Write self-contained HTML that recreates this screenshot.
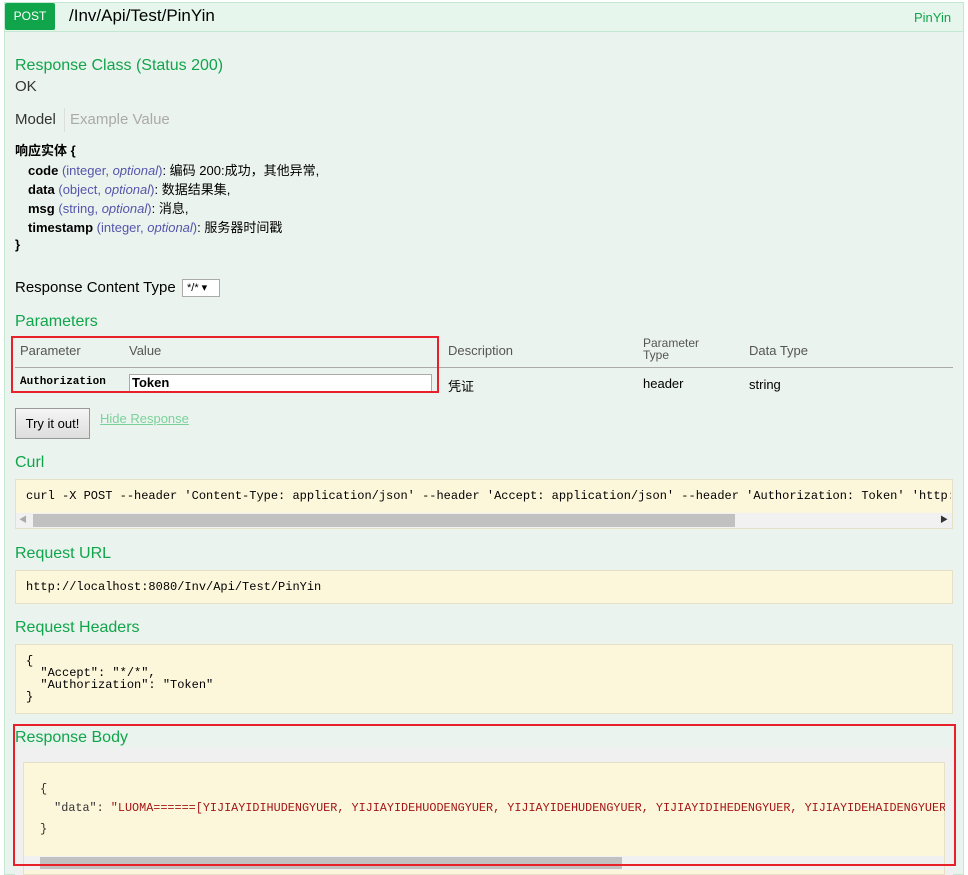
<!DOCTYPE html>
<html><head><meta charset="utf-8"><style>
*{margin:0;padding:0;box-sizing:border-box}
body{width:968px;height:875px;background:#fff;font-family:"Liberation Sans","Noto Sans CJK SC",sans-serif;position:relative;overflow:hidden;color:#000}
.a{position:absolute;white-space:nowrap}
.g{color:#10a54a;font-size:16px}
.m{font-family:"Liberation Mono",monospace;font-size:12px}
.box{position:absolute;background:#fcf6db;border:1px solid #e5e0c6}
.sm{font-size:13px}
.p{color:#5555aa}
</style></head><body>
<div class="a" style="left:4px;top:2px;width:960px;height:873px;background:#ebf3ef;border:1px solid #c3e8d1"></div>
<div class="a" style="left:5px;top:3px;width:958px;height:29px;background:#e7f6ec;border-bottom:1px solid #c3e8d1"></div>
<div class="a" style="left:5px;top:3px;width:50px;height:27px;background:#10a54a;color:#fff;font-size:12px;line-height:27px;text-align:center;border-radius:2px">POST</div>
<div class="a" style="left:69px;top:6px;font-size:17px">/Inv/Api/Test/PinYin</div>
<div class="a" style="left:914px;top:10px;font-size:13px;color:#10a54a">PinYin</div>

<div class="a g" style="left:15px;top:57px">Response Class (Status 200)</div>
<div class="a" style="left:15px;top:78px;font-size:15px;color:#333">OK</div>
<div class="a" style="left:15px;top:111px;font-size:15px;color:#333">Model</div>
<div class="a" style="left:64px;top:108px;width:1px;height:24px;background:#ddd"></div>
<div class="a" style="left:70px;top:111px;font-size:15px;color:#aaa">Example Value</div>
<div class="a sm" style="left:15px;top:140px;font-weight:bold">响应实体 {</div>
<div class="a sm" style="left:28px;top:160px"><b>code</b> <span class="p">(integer, <i>optional</i>)</span>: 编码 200:成功，其他异常,</div>
<div class="a sm" style="left:28px;top:179px"><b>data</b> <span class="p">(object, <i>optional</i>)</span>: 数据结果集,</div>
<div class="a sm" style="left:28px;top:198px"><b>msg</b> <span class="p">(string, <i>optional</i>)</span>: 消息,</div>
<div class="a sm" style="left:28px;top:217px"><b>timestamp</b> <span class="p">(integer, <i>optional</i>)</span>: 服务器时间戳</div>
<div class="a sm" style="left:15px;top:237px;font-weight:bold">}</div>

<div class="a" style="left:15px;top:279px;font-size:15px">Response Content Type</div>
<div class="a" style="left:182px;top:279px;width:38px;height:18px;background:#fff;border:1px solid #aaa;font-size:11px;line-height:16px;padding-left:4px">*/* ▾</div>
<div class="a g" style="left:15px;top:313px">Parameters</div>
<div class="a sm" style="left:20px;top:343px;color:#555">Parameter</div>
<div class="a sm" style="left:129px;top:343px;color:#555">Value</div>
<div class="a sm" style="left:448px;top:343px;color:#555">Description</div>
<div class="a" style="left:643px;top:337px;color:#555;font-size:12px;line-height:12px">Parameter<br>Type</div>
<div class="a sm" style="left:749px;top:343px;color:#555">Data Type</div>
<div class="a" style="left:15px;top:367px;width:938px;height:1px;background:#aaa"></div>
<div class="a" style="left:20px;top:376px;font-family:'Liberation Mono',monospace;font-size:11px;font-weight:bold">Authorization</div>
<div class="a" style="left:129px;top:374px;width:303px;height:18px;background:#fff;border:1px solid #aaa;font-size:13px;font-weight:bold;padding-left:2px;line-height:16px">Token</div>
<div class="a sm" style="left:448px;top:376px">凭证</div>
<div class="a sm" style="left:643px;top:376px">header</div>
<div class="a sm" style="left:749px;top:377px">string</div>
<div class="a" style="left:11px;top:336px;width:428px;height:57px;border:2px solid #e8202a"></div>

<div class="a" style="left:15px;top:408px;width:75px;height:31px;background:linear-gradient(#f5f5f5,#ddd);border:1px solid #999;font-size:13px;line-height:29px;text-align:center">Try it out!</div>
<div class="a sm" style="left:100px;top:411px;color:#7cd19a;text-decoration:underline">Hide Response</div>

<div class="a g" style="left:15px;top:454px">Curl</div>
<div class="box" style="left:15px;top:479px;width:938px;height:50px"></div>
<div class="a m" style="left:26px;top:489px;width:925px;overflow:hidden">curl -X POST --header 'Content-Type: application/json' --header 'Accept: application/json' --header 'Authorization: Token' 'http://localhost</div>
<div class="a" style="left:16px;top:513px;width:936px;height:15px;background:#f1f1f1"></div>
<div class="a" style="left:33px;top:514px;width:702px;height:13px;background:#c1c1c1"></div>
<div class="a" style="left:19px;top:514px;font-size:8px;color:#aaa">◀</div>
<div class="a" style="left:940px;top:514px;font-size:8px;color:#333">▶</div>

<div class="a g" style="left:15px;top:545px">Request URL</div>
<div class="box" style="left:15px;top:570px;width:938px;height:34px"></div>
<div class="a m" style="left:26px;top:580px">http://localhost:8080/Inv/Api/Test/PinYin</div>

<div class="a g" style="left:15px;top:619px">Request Headers</div>
<div class="box" style="left:15px;top:644px;width:938px;height:70px"></div>
<div class="a m" style="left:26px;top:655px;line-height:12px;white-space:pre">{
  "Accept": "*/*",
  "Authorization": "Token"
}</div>

<div class="a g" style="left:15px;top:729px">Response Body</div>
<div class="a" style="left:15px;top:748px;width:938px;height:127px;background:#f0f0f0"></div>
<div class="box" style="left:23px;top:762px;width:922px;height:113px"></div>
<div class="a m" style="left:40px;top:782px;color:#333">{</div>
<div class="a m" style="left:40px;top:801px;width:905px;overflow:hidden;color:#333;font-size:11.8px;white-space:pre">  "data": <span style="color:#a31515">"LUOMA======[YIJIAYIDIHUDENGYUER, YIJIAYIDEHUODENGYUER, YIJIAYIDEHUDENGYUER, YIJIAYIDIHEDENGYUER, YIJIAYIDEHAIDENGYUER]"</span></div>
<div class="a m" style="left:40px;top:822px;color:#333">}</div>
<div class="a" style="left:24px;top:856px;width:920px;height:14px;background:#f1f1f1"></div>
<div class="a" style="left:40px;top:857px;width:582px;height:12px;background:#c1c1c1"></div>
<div class="a" style="left:13px;top:724px;width:943px;height:142px;border:2px solid #e8202a"></div>
</body></html>
